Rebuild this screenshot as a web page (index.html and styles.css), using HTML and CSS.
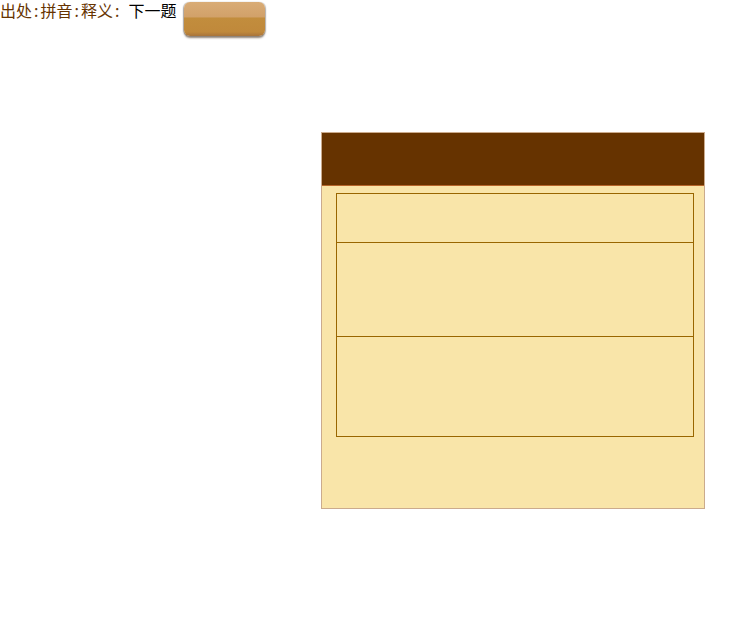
FILE: index.html
```html
<!DOCTYPE html>
<html>
<head>
<meta charset="utf-8">
<link rel="stylesheet" href="styles.css">
</head>
<body>
<div class="top">
  <span class="label">出处<span class="colon">:</span>拼音<span class="colon">:</span>释义<span class="colon">:</span></span><span class="next">下一题</span>
  <div class="btn"></div>
</div>
<div class="panel">
  <div class="panel-head"></div>
  <div class="panel-body">
    <div class="box">
      <div class="row r1"></div>
      <div class="row r2"></div>
      <div class="row r3"></div>
    </div>
  </div>
</div>
</body>
</html>
```
FILE: styles.css
```css
html, body {
  margin: 0;
  padding: 0;
  background: #fff;
}
.top {
  display: flex;
  align-items: flex-start;
  font-family: "Noto Sans CJK SC", sans-serif;
  font-size: 16px;
  line-height: 20px;
  height: 40px;
  white-space: nowrap;
}
.label {
  color: #663300;
}
.colon {
  padding: 0 2px;
}
.next {
  color: #000;
  margin-left: 7px;
}
.btn {
  margin-left: 8px;
  margin-top: 2px;
  width: 81px;
  height: 34px;
  border-radius: 6px;
  background: linear-gradient(to bottom, #d9ac76 0%, #d1a16a 44%, #c28d3d 47%, #c0893b 88%, #a8733a 100%);
  box-shadow: 0 2px 2px rgba(70, 50, 30, 0.6), -1px 0 1px rgba(0,0,0,0.25), 1px 0 1px rgba(0,0,0,0.2);
}
.panel {
  margin-left: 321px;
  margin-top: 92px;
  width: 382px;
  height: 375px;
  border: 1px solid #cbab8d;
  background: #f9e5a9;
}
.panel-head {
  height: 52px;
  background: #663300;
  border-bottom: 1px solid #b7652a;
}
.panel-body {
  padding: 7px 10px 0 14px;
}
.box {
  border: 1px solid #996600;
}
.row + .row {
  border-top: 1px solid #996600;
}
.r1 { height: 48px; }
.r2 { height: 93px; }
.r3 { height: 99px; }
```
